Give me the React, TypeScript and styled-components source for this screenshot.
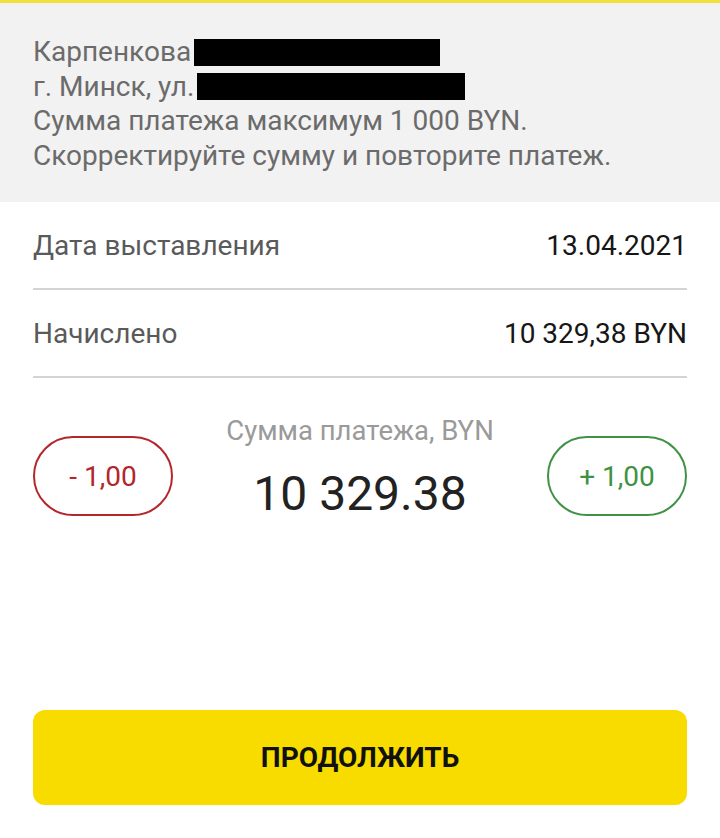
import React from "react";
import styled, { createGlobalStyle } from "styled-components";

const GlobalStyle = createGlobalStyle`
  html, body {
    margin: 0;
    padding: 0;
    background: #ffffff;
    font-family: Roboto, "Noto Sans", Arial, sans-serif;
  }
`;

const Page = styled.div`
  width: 720px;
  height: 838px;
  display: flex;
  flex-direction: column;
  background: #ffffff;
  border-top: 3px solid #f3df3a;
  box-sizing: border-box;
  overflow: hidden;
`;

const Notice = styled.div`
  background: #f2f2f2;
  padding: 32px 33px 29px;
  color: #6b6b6b;
  font-size: 28px;
  line-height: 34.5px;
`;

const NoticeLine = styled.div`
  display: flex;
  align-items: center;
  white-space: nowrap;
`;

const Redacted = styled.span<{ $width: number }>`
  display: inline-block;
  width: ${(p) => p.$width}px;
  height: 27px;
  background: #000;
  margin-left: 3px;
`;

const Details = styled.div`
  padding: 0 33px;
`;

const Row = styled.div`
  display: flex;
  justify-content: space-between;
  align-items: center;
  height: 86px;
  border-bottom: 2px solid #d4d4d4;
  font-size: 28px;
`;

const Label = styled.span`
  color: #5a5a5a;
`;

const Value = styled.span`
  color: #161616;
`;

const AmountBlock = styled.div`
  display: grid;
  grid-template-columns: 140px 1fr 140px;
  align-items: start;
  padding: 36px 33px 0;
`;

const StepButton = styled.button<{ $tone: string }>`
  height: 80px;
  margin-top: 22px;
  border: 2px solid ${(p) => p.$tone};
  border-radius: 40px;
  background: #fff;
  color: ${(p) => p.$tone};
  font-family: inherit;
  font-size: 28px;
  padding: 0;
`;

const AmountCenter = styled.div`
  display: flex;
  flex-direction: column;
  align-items: center;
`;

const AmountCaption = styled.div`
  color: #9a9a9a;
  font-size: 27.5px;
  line-height: 34px;
`;

const AmountValue = styled.div`
  color: #222;
  font-size: 48px;
  line-height: 58px;
  margin-top: 17px;
`;

const Spacer = styled.div`
  flex: 1;
`;

const ContinueButton = styled.button`
  margin: 0 33px 33px;
  height: 95px;
  border: none;
  border-radius: 12px;
  background: #f8dc00;
  color: #111;
  font-family: inherit;
  font-size: 28px;
  font-weight: 700;
`;

export default function App() {
  return (
    <>
      <GlobalStyle />
      <Page>
        <Notice>
          <NoticeLine>
            Карпенкова
            <Redacted $width={246} />
          </NoticeLine>
          <NoticeLine>
            г. Минск, ул.
            <Redacted $width={268} />
          </NoticeLine>
          <NoticeLine>Сумма платежа максимум 1 000 BYN.</NoticeLine>
          <NoticeLine>Скорректируйте сумму и повторите платеж.</NoticeLine>
        </Notice>
        <Details>
          <Row>
            <Label>Дата выставления</Label>
            <Value>13.04.2021</Value>
          </Row>
          <Row>
            <Label>Начислено</Label>
            <Value>10 329,38 BYN</Value>
          </Row>
        </Details>
        <AmountBlock>
          <StepButton $tone="#b3262c">- 1,00</StepButton>
          <AmountCenter>
            <AmountCaption>Сумма платежа, BYN</AmountCaption>
            <AmountValue>10 329.38</AmountValue>
          </AmountCenter>
          <StepButton $tone="#3f9143">+ 1,00</StepButton>
        </AmountBlock>
        <Spacer />
        <ContinueButton>ПРОДОЛЖИТЬ</ContinueButton>
      </Page>
    </>
  );
}
